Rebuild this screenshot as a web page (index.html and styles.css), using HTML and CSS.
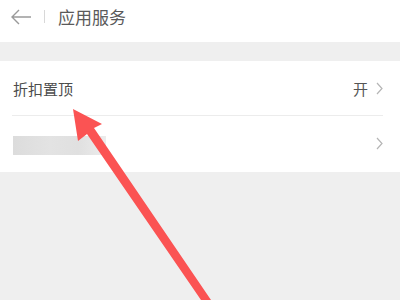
FILE: index.html
```html
<!DOCTYPE html>
<html>
<head>
<meta charset="utf-8">
<link rel="stylesheet" href="styles.css">
</head>
<body>
<div class="page">
  <div class="header">
    <svg class="back" width="22" height="16" viewBox="0 0 22 16"><path d="M21 8H2M9 1L2 8l7 7" fill="none" stroke="#9a9a9a" stroke-width="1.4"/></svg>
    <span class="sep"></span>
    <span class="title">应用服务</span>
  </div>
  <div class="band"></div>
  <div class="card">
    <div class="row">
      <span class="label">折扣置顶</span>
      <span class="value">开</span>
      <svg class="chev" width="7" height="13" viewBox="0 0 7 13"><path d="M1 1l5 5.5L1 12" fill="none" stroke="#b5b5b5" stroke-width="1.2"/></svg>
    </div>
    <div class="divider"></div>
    <div class="row">
      <span class="blur"></span>
      <svg class="chev" width="7" height="13" viewBox="0 0 7 13"><path d="M1 1l5 5.5L1 12" fill="none" stroke="#b5b5b5" stroke-width="1.2"/></svg>
    </div>
  </div>
  <svg class="pointer" width="400" height="300" viewBox="0 0 400 300">
    <polygon points="73,109 102,124 94,128 211,300 201,300 87,134 78,141" fill="#fb5353"/>
  </svg>
</div>
</body>
</html>
```
FILE: styles.css
```css
html, body { margin: 0; padding: 0; }
body { width: 400px; height: 300px; overflow: hidden; background: #efefef; font-family: "Noto Sans CJK SC", "Noto Sans", sans-serif; }
.page { position: relative; width: 400px; height: 300px; }
.header { height: 42px; background: #fff; display: flex; align-items: center; padding-left: 10px; padding-bottom: 9px; box-sizing: border-box; }
.back { display: block; }
.sep { width: 1px; height: 13px; background: #d8d8d8; margin-left: 12px; margin-right: 13px; }
.title { font-size: 17px; color: #5a5a5a; line-height: 20px; }
.band { height: 19px; background: #efefef; }
.card { background: #fff; height: 111px; }
.row { height: 54px; display: flex; align-items: center; padding-left: 13px; padding-right: 17px; }
.label { font-size: 15px; color: #4c4c4c; flex: 1; }
.value { font-size: 15px; color: #555; margin-right: 8px; }
.chev { display: block; }
.divider { height: 1px; background: #ececec; margin-left: 12px; margin-right: 17px; }
.blur { flex: 1; height: 0; }
.blur::before { content: ""; display: block; width: 93px; height: 19px; margin-top: -7px; background: linear-gradient(90deg, #dcdcdc, #e3e3e3 40%, #e0e0e0 70%, #ececec); }
.pointer { position: absolute; left: 0; top: 0; }
```
